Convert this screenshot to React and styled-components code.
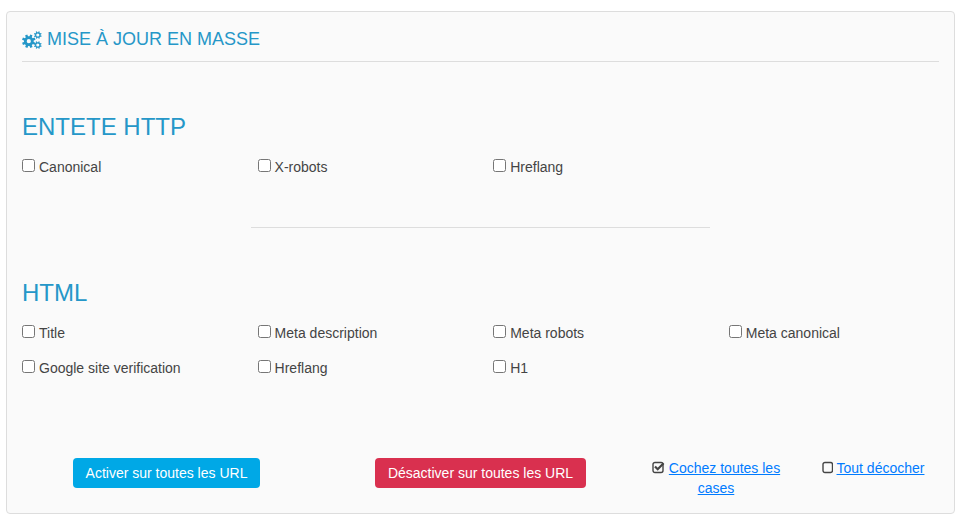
import React from "react";
import styled, { createGlobalStyle } from "styled-components";

const GlobalStyle = createGlobalStyle`
  body {
    margin: 0;
    background: #fff;
    font-family: "Liberation Sans", Arial, sans-serif;
    font-size: 14px;
    color: #444;
  }
`;

const sections = [
  {
    title: "ENTETE HTTP",
    options: ["Canonical", "X-robots", "Hreflang"],
  },
  {
    title: "HTML",
    options: [
      "Title",
      "Meta description",
      "Meta robots",
      "Meta canonical",
      "Google site verification",
      "Hreflang",
      "H1",
    ],
  },
];

const Gear = ({ x, y, outer, ring, stroke, tooth }) => (
  <g>
    {[0, 45, 90, 135, 180, 225, 270, 315].map((angle) => (
      <rect
        key={angle}
        x={x - tooth / 2}
        y={y - outer}
        width={tooth}
        height={outer - ring}
        transform={`rotate(${angle + 22} ${x} ${y})`}
      />
    ))}
    <circle cx={x} cy={y} r={ring} fill="none" stroke="#2597c8" strokeWidth={stroke} />
  </g>
);

const CogsIcon = () => (
  <svg width="20" height="18" viewBox="0 0 20 18" fill="#2597c8">
    <Gear x={6.8} y={10.2} outer={6.8} ring={3.5} stroke={2.8} tooth={2.4} />
    <Gear x={15.8} y={4} outer={3.9} ring={2.2} stroke={1.2} tooth={1.3} />
    <Gear x={15.8} y={14} outer={3.9} ring={2.2} stroke={1.2} tooth={1.3} />
  </svg>
);

const CheckedIcon = () => (
  <svg width="13" height="13" viewBox="0 0 13 13" fill="none">
    <rect x="1" y="1.5" width="10" height="10" rx="2" stroke="#444" strokeWidth="1.4" />
    <path d="M3 5.5 L5.7 8.2 L11.6 2.2" stroke="#444" strokeWidth="2.2" />
  </svg>
);

const EmptyIcon = () => (
  <svg width="11" height="13" viewBox="0 0 11 13" fill="none">
    <rect x="1" y="1.5" width="9.5" height="10" rx="2" stroke="#444" strokeWidth="1.4" />
  </svg>
);

const OptionSection = ({ title, options }) => (
  <Section>
    <SectionTitle>{title}</SectionTitle>
    <OptionGrid>
      {options.map((name) => (
        <Option key={name}>
          <input type="checkbox" />
          <span>{name}</span>
        </Option>
      ))}
    </OptionGrid>
  </Section>
);

const App = () => {
  return (
    <>
      <GlobalStyle />
      <Page>
        <Card>
          <CardTitle>
            <CogsIcon />
            <span>Mise à jour en masse</span>
          </CardTitle>
          <OptionSection {...sections[0]} />
          <Divider />
          <OptionSection {...sections[1]} />
          <Footer>
            <FooterCell>
              <Button $color="#00a8e6">Activer sur toutes les URL</Button>
            </FooterCell>
            <FooterCell>
              <Button $color="#d9304f">Désactiver sur toutes les URL</Button>
            </FooterCell>
            <LinkCells>
              <LinkCell>
                <CheckedIcon />
                <a href="#all">Cochez toutes les cases</a>
              </LinkCell>
              <LinkCell>
                <EmptyIcon />
                <a href="#none">Tout décocher</a>
              </LinkCell>
            </LinkCells>
          </Footer>
        </Card>
      </Page>
    </>
  );
};

const Page = styled.div`
  padding: 11px 5px 7px 6px;
`;

const Card = styled.div`
  box-sizing: border-box;
  height: 503px;
  padding: 0 15px;
  background: #fafafa;
  border: 1px solid #ddd;
  border-radius: 4px;
`;

const CardTitle = styled.h3`
  display: flex;
  align-items: center;
  gap: 5px;
  height: 43px;
  margin: 0;
  padding-top: 6px;
  border-bottom: 1px solid #ddd;
  color: #2597c8;
  font-size: 18px;
  font-weight: 400;
  text-transform: uppercase;
`;

const Section = styled.div`
  padding-top: 47px;
`;

const SectionTitle = styled.h2`
  margin: 0 0 12px;
  color: #2597c8;
  font-size: 24px;
  font-weight: 400;
  line-height: 36px;
`;

const OptionGrid = styled.div`
  display: grid;
  grid-template-columns: repeat(4, 235.6px);
  grid-auto-rows: 35px;
  min-height: 35px;
`;

const Option = styled.label`
  display: flex;
  align-items: flex-start;
  gap: 4px;
  line-height: 20px;

  input {
    width: 13px;
    height: 13px;
    margin: 2px 0 0;
  }
`;

const Divider = styled.hr`
  width: 459px;
  height: 1px;
  margin: 35px auto 0;
  border: 0;
  background: #ddd;
`;

const Footer = styled.div`
  display: grid;
  grid-template-columns: repeat(3, 314px);
  margin: 65px -13px 0 -12.5px;
`;

const FooterCell = styled.div`
  display: flex;
  justify-content: center;
`;

const Button = styled.button`
  height: 30px;
  padding: 0 13px;
  background: ${(props) => props.$color};
  border: 0;
  border-radius: 4px;
  color: #fff;
  font-family: inherit;
  font-size: 14px;
`;

const LinkCells = styled.div`
  display: grid;
  grid-template-columns: 158px 156px;
  margin-left: -0.5px;
`;

const LinkCell = styled.div`
  line-height: 20px;
  text-align: center;

  svg {
    margin-right: 4px;
    vertical-align: -1px;
  }

  a {
    color: #007bff;
  }
`;

export default App;
